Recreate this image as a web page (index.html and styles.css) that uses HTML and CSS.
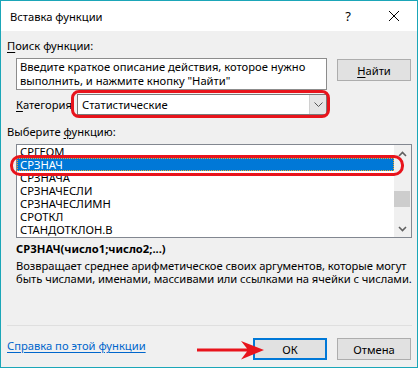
FILE: index.html
```html
<!DOCTYPE html>
<html lang="ru">
<head>
    <meta charset="UTF-8">
    <title>Вставка функции</title>
    <link rel="stylesheet" href="styles.css">
</head>
<body>
    <div class="window">
        <!-- Title bar -->
        <div class="titlebar">
            <span class="title">Вставка функции</span>
            <span class="tb-btn help">?</span>
            <span class="tb-btn">
                <svg width="10" height="10" viewBox="0 0 10 10">
                    <path d="M0 0 L10 10 M10 0 L0 10" stroke="#000" stroke-width="1" fill="none"/>
                </svg>
            </span>
        </div>

        <div class="content">
            <div class="label"><u>П</u>оиск функции:</div>
            <div class="search-row">
                <div class="search-box">Введите краткое описание действия, которое нужно выполнить, и нажмите кнопку "Найти"</div>
                <button class="btn find-btn"><u>Н</u>айти</button>
            </div>

            <div class="category-row">
                <span class="cat-label"><u>К</u>атегория</span>
                <div class="combo">
                    <span class="combo-value">Статистические</span>
                    <span class="combo-arrow">
                        <svg width="9" height="5" viewBox="0 0 9 5">
                            <polyline points="0.5,0.5 4.5,4.5 8.5,0.5" stroke="#555" stroke-width="1" fill="none"/>
                        </svg>
                    </span>
                </div>
            </div>

            <div class="label list-label">Выберите <u>ф</u>ункцию:</div>
            <div class="listbox">
                <div class="list-items">
                    <div class="item">СРГЕОМ</div>
                    <div class="item selected">СРЗНАЧ</div>
                    <div class="item">СРЗНАЧА</div>
                    <div class="item">СРЗНАЧЕСЛИ</div>
                    <div class="item">СРЗНАЧЕСЛИМН</div>
                    <div class="item">СРОТКЛ</div>
                    <div class="item">СТАНДОТКЛОН.В</div>
                </div>
                <div class="scrollbar">
                    <div class="sb-btn">
                        <svg width="9" height="6" viewBox="0 0 9 6">
                            <polyline points="1,5 4.5,1.5 8,5" stroke="#606060" stroke-width="1.6" fill="none"/>
                        </svg>
                    </div>
                    <div class="sb-track"><div class="sb-thumb"></div></div>
                    <div class="sb-btn">
                        <svg width="9" height="6" viewBox="0 0 9 6">
                            <polyline points="1,1 4.5,4.5 8,1" stroke="#606060" stroke-width="1.6" fill="none"/>
                        </svg>
                    </div>
                </div>
                <div class="ring list-ring"></div>
            </div>

            <div class="signature">СРЗНАЧ(число1;число2;...)</div>
            <p class="desc">Возвращает среднее арифметическое своих аргументов, которые могут<br>быть числами, именами, массивами или ссылками на ячейки с числами.</p>

            <div class="separator"></div>

            <div class="footer">
                <a class="help-link" href="#">Справка по этой функции</a>
                <div class="buttons">
                    <button class="btn btn-default">ОК</button>
                    <button class="btn">Отмена</button>
                    <svg class="arrow" width="68" height="21" viewBox="0 0 68 21">
                        <path d="M0 8.5 H50 L44 1 L67 10 L44 19.5 L50 11.5 H0 Z" fill="#e8141c"/>
                    </svg>
                </div>
            </div>
        </div>
    </div>
</body>
</html>
```

FILE: styles.css
```css
/* Page */
body {
    margin: 0;
    font-family: "Noto Sans", sans-serif;
    font-size: 11.2px;
    line-height: 15px;
    color: #000;
    background: #fff;
}

/* Dialog window */
.window {
    width: 418px;
    height: 368px;
    box-sizing: border-box;
    border: 1px solid #1ba6b8;
    display: flex;
    flex-direction: column;
}

.titlebar {
    height: 30px;
    flex: none;
    display: flex;
    align-items: center;
    padding-left: 9px;
    background: #fff;
}

.title {
    flex: 1;
}

.tb-btn {
    width: 46px;
    height: 30px;
    display: flex;
    align-items: center;
    justify-content: center;
}

.help {
    font-size: 13px;
}

.content {
    flex: 1;
    display: flex;
    flex-direction: column;
    background: #f0f0f0;
    padding: 7px 5px 7px 6px;
}

u {
    text-decoration-thickness: 1px;
    text-underline-offset: 2px;
}

/* Search */
.search-row {
    display: flex;
    align-items: flex-start;
    margin-top: 5px;
    padding-left: 9px;
}

.search-box {
    width: 311px;
    height: 32px;
    box-sizing: border-box;
    border: 1px solid #8c8c8c;
    background: #fff;
    padding: 1px 3px;
    line-height: 14px;
}

.btn {
    width: 74px;
    height: 22px;
    padding: 0;
    border: 1px solid #adadad;
    background: #e1e1e1;
    font: inherit;
    color: #000;
}

.find-btn {
    margin-left: auto;
    margin-right: 1px;
    margin-top: 1px;
}

/* Category */
.category-row {
    display: flex;
    align-items: center;
    margin-top: 4px;
    padding-left: 9px;
}

.cat-label {
    width: 61px;
}

.combo {
    position: relative;
    width: 250px;
    height: 21px;
    box-sizing: border-box;
    border: 1px solid #7a7a7a;
    background: #fff;
    display: flex;
}

.combo-value {
    flex: 1;
    padding-left: 4px;
    line-height: 19px;
}

.combo-arrow {
    width: 16px;
    background: #e5e5e5;
    border-left: 1px solid #d0d0d0;
    display: flex;
    align-items: center;
    justify-content: center;
}

/* red annotation around the category box */
.combo::after {
    content: "";
    position: absolute;
    left: -7px;
    right: -4px;
    top: -5px;
    bottom: -4px;
    border: 3px solid #e8141c;
    border-radius: 8px;
}

/* Function list */
.list-label {
    margin-top: 9px;
}

.listbox {
    position: relative;
    height: 94px;
    box-sizing: border-box;
    margin: 5px 0 0 9px;
    border: 1px solid #828790;
    background: #fff;
    display: flex;
}

.list-items {
    flex: 1;
    overflow: hidden;
}

.item {
    height: 13px;
    line-height: 13px;
    padding-left: 3px;
}

.item.selected {
    background: #0078d7;
    color: #fff;
    outline: 1px dotted #f5a623;
    outline-offset: -1px;
}

.scrollbar {
    width: 17px;
    background: #f0f0f0;
    display: flex;
    flex-direction: column;
}

.sb-btn {
    height: 17px;
    display: flex;
    align-items: center;
    justify-content: center;
}

.sb-track {
    flex: 1;
}

.sb-thumb {
    height: 16px;
    margin: 29px 1px 0 0;
    background: #cdcdcd;
}

.ring {
    position: absolute;
    box-sizing: border-box;
    border: 3px solid #e8141c;
}

.list-ring {
    left: -7px;
    right: 7px;
    top: 10px;
    height: 21px;
    border-radius: 10px;
}

/* Description */
.signature {
    margin-top: 3px;
    padding-left: 9px;
    font-weight: bold;
}

.desc {
    margin: 3px 0 0;
    padding-left: 9px;
    line-height: 13px;
    white-space: nowrap;
    letter-spacing: -0.05px;
}

.separator {
    margin-top: auto;
    height: 1px;
    background: #dfdfdf;
}

/* Footer */
.footer {
    display: flex;
    align-items: flex-start;
    margin-top: 12px;
}

.help-link {
    color: #0066cc;
    text-decoration: underline;
    text-underline-offset: 2px;
}

.buttons {
    position: relative;
    margin-left: auto;
    margin-right: 1px;
    display: flex;
    gap: 10px;
}

.btn-default {
    border: 2px solid #0078d7;
}

.arrow {
    position: absolute;
    left: -56px;
    top: 2px;
}
```
